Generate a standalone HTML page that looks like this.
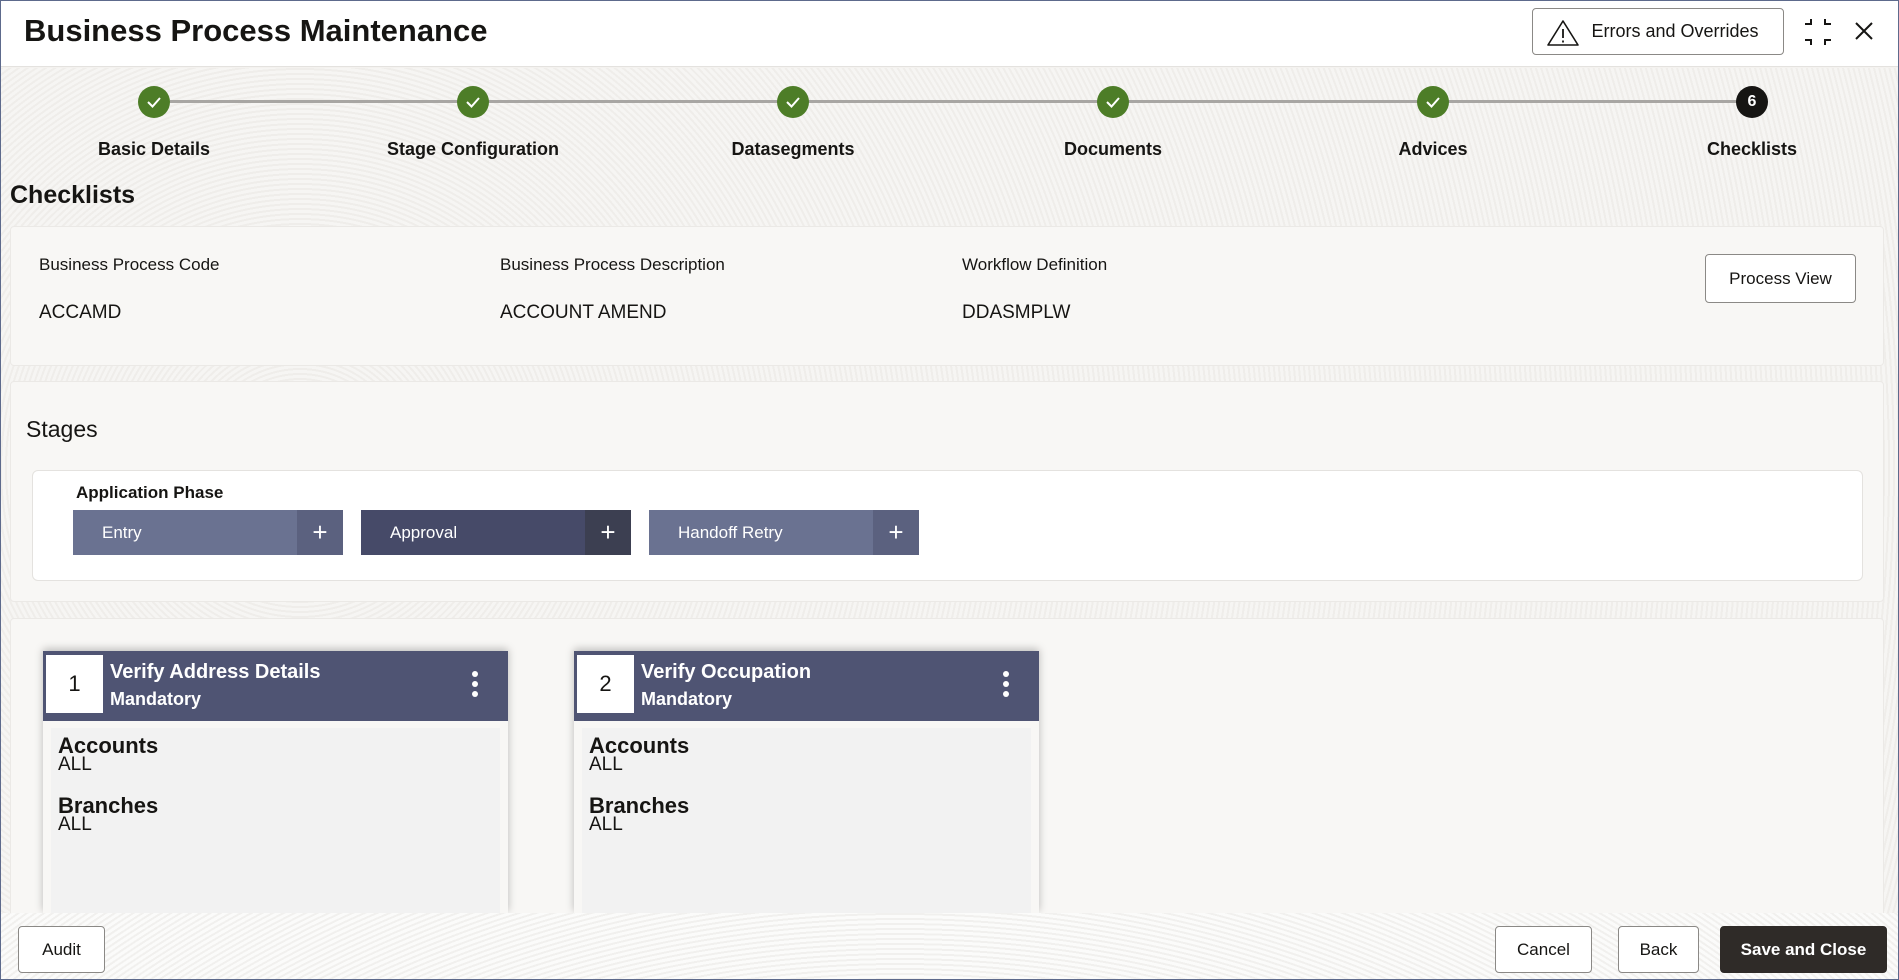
<!DOCTYPE html>
<html><head><meta charset="utf-8"><style>
*{box-sizing:border-box;margin:0;padding:0}
body{width:1899px;height:980px;overflow:hidden;font-family:"Liberation Sans",sans-serif;color:#161513;background:#f4f2ef;position:relative}
.frame{position:absolute;inset:0;border:1px solid #5d6a8c;pointer-events:none;z-index:9}
.hdr{position:absolute;left:0;top:0;width:1899px;height:67px;background:#fff;border-bottom:1px solid #e4e2df}
.hdr h1{position:absolute;left:24px;top:13px;font-size:31px;font-weight:bold;letter-spacing:0px}
.btn{position:absolute;border:1px solid #8b8986;border-radius:4px;background:#fff;font-size:17px;display:flex;align-items:center;justify-content:center;color:#161513}
.bg{position:absolute;left:0;top:68px;width:1899px;height:912px;background:repeating-radial-gradient(circle at 300px 400px,#f6f5f3 0 3px,#efedea 3px 5px);}
.step{position:absolute;top:86px;width:32px;height:32px;border-radius:50%;background:#4d7d27;display:flex;align-items:center;justify-content:center}
.line{position:absolute;top:100px;height:3px;background:#a8a6a3}
.lbl{position:absolute;top:139px;font-size:18px;font-weight:bold;transform:translateX(-50%);white-space:nowrap}
.panel{position:absolute;left:10px;width:1874px;background:#f8f7f5;border:1px solid #ebe9e6;border-radius:4px}
.k{position:absolute;font-size:17px}
.v{position:absolute;font-size:19px}
.sb{position:absolute;top:510px;height:45px;color:#fff;font-size:17px;display:flex;align-items:center;padding-left:29px}
.sb .p{position:absolute;right:0;top:0;width:46px;height:45px;display:flex;align-items:center;justify-content:center;font-size:26px;font-weight:300}
.card{position:absolute;top:651px;width:465px;height:262px;background:#f8f7f5;box-shadow:0 -2px 8px rgba(0,0,0,.25)}
.ch{height:70px;background:#4f5473;position:relative;color:#fff}
.num{position:absolute;left:3px;top:4px;width:57px;height:58px;background:#fff;color:#161513;font-size:22px;display:flex;align-items:center;justify-content:center}
.ct{position:absolute;left:67px;top:10px;font-size:20px;font-weight:bold}
.cm{position:absolute;left:67px;top:38px;font-size:18px;font-weight:bold}
.dots{position:absolute;right:30px;top:20px;width:6px}
.dots i{display:block;width:6px;height:6px;border-radius:50%;background:#fff;margin-bottom:4px}
.cb{position:absolute;left:8px;top:77px;right:8px;bottom:0;background:#f2f2f2;padding:8px 7px}
.cb b{display:block;font-size:22px;line-height:20px}
.cb span{display:block;font-size:19px;line-height:18px;margin-bottom:22px}
.foot{position:absolute;left:0;top:913px;width:1899px;height:67px;background:repeating-radial-gradient(circle at 900px 1200px,#fbfbfa 0 3px,#f1f0ee 3px 5px)}
</style></head><body>
<div class="bg"></div>
<div class="hdr"><h1>Business Process Maintenance</h1>
<div class="btn" style="left:1532px;top:8px;width:252px;height:47px;padding-left:34px;font-size:18px">
<svg style="position:absolute;left:13px;top:10px" width="34" height="28" viewBox="0 0 34 28"><path d="M17 2 L32 26 H2 Z" fill="none" stroke="#161513" stroke-width="1.6" stroke-linejoin="round"/><path d="M17 10 V19 M17 21.5 V23.5" stroke="#161513" stroke-width="1.8"/></svg>Errors and Overrides</div>
<svg style="position:absolute;left:1803px;top:16px" width="30" height="32" viewBox="0 0 30 32"><path d="M8 3 V8 H2 M22 3 V8 H28 M8 29 V24 H2 M22 29 V24 H28" fill="none" stroke="#161513" stroke-width="2"/></svg>
<svg style="position:absolute;left:1854px;top:21px" width="20" height="20" viewBox="0 0 20 20"><path d="M2 2 L18 18 M18 2 L2 18" stroke="#161513" stroke-width="2"/></svg>
</div>
<div class="line" style="left:170px;width:1580px"></div>
<div class="step" style="left:138px"><svg width="16" height="14"><path d="M2 7 L6.5 11.5 L14 3" fill="none" stroke="#fff" stroke-width="2"/></svg></div>
<div class="step" style="left:457px"><svg width="16" height="14"><path d="M2 7 L6.5 11.5 L14 3" fill="none" stroke="#fff" stroke-width="2"/></svg></div>
<div class="step" style="left:777px"><svg width="16" height="14"><path d="M2 7 L6.5 11.5 L14 3" fill="none" stroke="#fff" stroke-width="2"/></svg></div>
<div class="step" style="left:1097px"><svg width="16" height="14"><path d="M2 7 L6.5 11.5 L14 3" fill="none" stroke="#fff" stroke-width="2"/></svg></div>
<div class="step" style="left:1417px"><svg width="16" height="14"><path d="M2 7 L6.5 11.5 L14 3" fill="none" stroke="#fff" stroke-width="2"/></svg></div>
<div class="step" style="left:1736px;background:#161513;color:#fff;font-weight:bold;font-size:16px">6</div>
<div class="lbl" style="left:154px">Basic Details</div>
<div class="lbl" style="left:473px">Stage Configuration</div>
<div class="lbl" style="left:793px">Datasegments</div>
<div class="lbl" style="left:1113px">Documents</div>
<div class="lbl" style="left:1433px">Advices</div>
<div class="lbl" style="left:1752px">Checklists</div>
<div style="position:absolute;left:10px;top:181px;font-size:25px;font-weight:bold">Checklists</div>
<div class="panel" style="top:226px;height:140px">
<div class="k" style="left:28px;top:28px">Business Process Code</div>
<div class="k" style="left:489px;top:28px">Business Process Description</div>
<div class="k" style="left:951px;top:28px">Workflow Definition</div>
<div class="v" style="left:28px;top:75px">ACCAMD</div>
<div class="v" style="left:489px;top:75px">ACCOUNT AMEND</div>
<div class="v" style="left:951px;top:75px">DDASMPLW</div>
<div class="btn" style="left:1694px;top:27px;width:151px;height:49px">Process View</div>
</div>
<div class="panel" style="top:381px;height:221px">
<div style="position:absolute;left:15px;top:34px;font-size:23px">Stages</div>
<div style="position:absolute;left:21px;top:88px;width:1831px;height:111px;background:#fff;border:1px solid #e4e2df;border-radius:6px">
<div style="position:absolute;left:43px;top:12px;font-size:17px;font-weight:bold">Application Phase</div></div>
</div>
<div class="sb" style="left:73px;width:270px;background:#6a7291">Entry<div class="p" style="background:#5b617f">+</div></div>
<div class="sb" style="left:361px;width:270px;background:#464a68">Approval<div class="p" style="background:#3c3f51">+</div></div>
<div class="sb" style="left:649px;width:270px;background:#6a7291">Handoff Retry<div class="p" style="background:#5b617f">+</div></div>
<div class="panel" style="top:618px;height:300px;border-bottom:none"></div>
<div class="card" style="left:43px"><div class="ch"><div class="num">1</div><div class="ct">Verify Address Details</div><div class="cm">Mandatory</div><div class="dots"><i></i><i></i><i></i></div></div>
<div class="cb"><b>Accounts</b><span>ALL</span><b>Branches</b><span>ALL</span></div></div>
<div class="card" style="left:574px"><div class="ch"><div class="num">2</div><div class="ct">Verify Occupation</div><div class="cm">Mandatory</div><div class="dots"><i></i><i></i><i></i></div></div>
<div class="cb"><b>Accounts</b><span>ALL</span><b>Branches</b><span>ALL</span></div></div>
<div class="foot"></div>
<div class="btn" style="left:18px;top:926px;width:87px;height:47px">Audit</div>
<div class="btn" style="left:1495px;top:926px;width:97px;height:47px">Cancel</div>
<div class="btn" style="left:1618px;top:926px;width:81px;height:47px">Back</div>
<div class="btn" style="left:1720px;top:926px;width:167px;height:47px;background:#2f2b28;border-color:#2f2b28;color:#fff;font-weight:bold">Save and Close</div>
<div class="frame"></div>
</body></html>
